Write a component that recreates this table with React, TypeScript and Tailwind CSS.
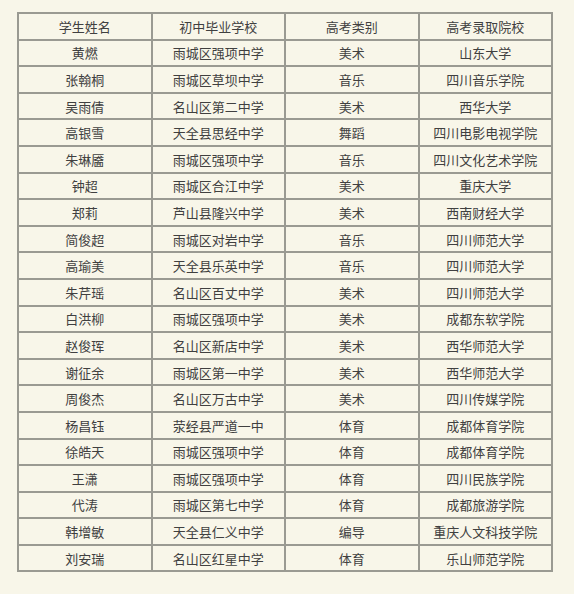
const rows: [string, string, string, string][] = [
  ["黄燃", "雨城区强项中学", "美术", "山东大学"],
  ["张翰桐", "雨城区草坝中学", "音乐", "四川音乐学院"],
  ["吴雨倩", "名山区第二中学", "美术", "西华大学"],
  ["高银雪", "天全县思经中学", "舞蹈", "四川电影电视学院"],
  ["朱琳靥", "雨城区强项中学", "音乐", "四川文化艺术学院"],
  ["钟超", "雨城区合江中学", "美术", "重庆大学"],
  ["郑莉", "芦山县隆兴中学", "美术", "西南财经大学"],
  ["简俊超", "雨城区对岩中学", "音乐", "四川师范大学"],
  ["高瑜美", "天全县乐英中学", "音乐", "四川师范大学"],
  ["朱芹瑶", "名山区百丈中学", "美术", "四川师范大学"],
  ["白洪柳", "雨城区强项中学", "美术", "成都东软学院"],
  ["赵俊珲", "名山区新店中学", "美术", "西华师范大学"],
  ["谢征余", "雨城区第一中学", "美术", "西华师范大学"],
  ["周俊杰", "名山区万古中学", "美术", "四川传媒学院"],
  ["杨昌钰", "荥经县严道一中", "体育", "成都体育学院"],
  ["徐皓天", "雨城区强项中学", "体育", "成都体育学院"],
  ["王潇", "雨城区强项中学", "体育", "四川民族学院"],
  ["代涛", "雨城区第七中学", "体育", "成都旅游学院"],
  ["韩增敏", "天全县仁义中学", "编导", "重庆人文科技学院"],
  ["刘安瑞", "名山区红星中学", "体育", "乐山师范学院"],
];

const head = ["学生姓名", "初中毕业学校", "高考类别", "高考录取院校"];

const cell = "border-2 border-[#9a9a92] h-[26.6px] p-0 text-center align-middle";

export default function App() {
  return (
    <div
      className="w-[574px] h-[594px] bg-[#f8f6e9] pt-[12px] pl-[17px] text-[#404040] text-[13px] leading-none"
      style={{ fontFamily: '"Noto Sans CJK SC", "Noto Sans", sans-serif' }}
    >
      <table className="border-collapse w-[536px] table-fixed">
        <thead>
          <tr>
            {head.map((h) => (
              <th key={h} className={cell + " font-normal"}>{h}</th>
            ))}
          </tr>
        </thead>
        <tbody>
          {rows.map((r) => (
            <tr key={r[0]}>
              {r.map((c, i) => (
                <td key={i} className={cell}>{c}</td>
              ))}
            </tr>
          ))}
        </tbody>
      </table>
    </div>
  );
}
